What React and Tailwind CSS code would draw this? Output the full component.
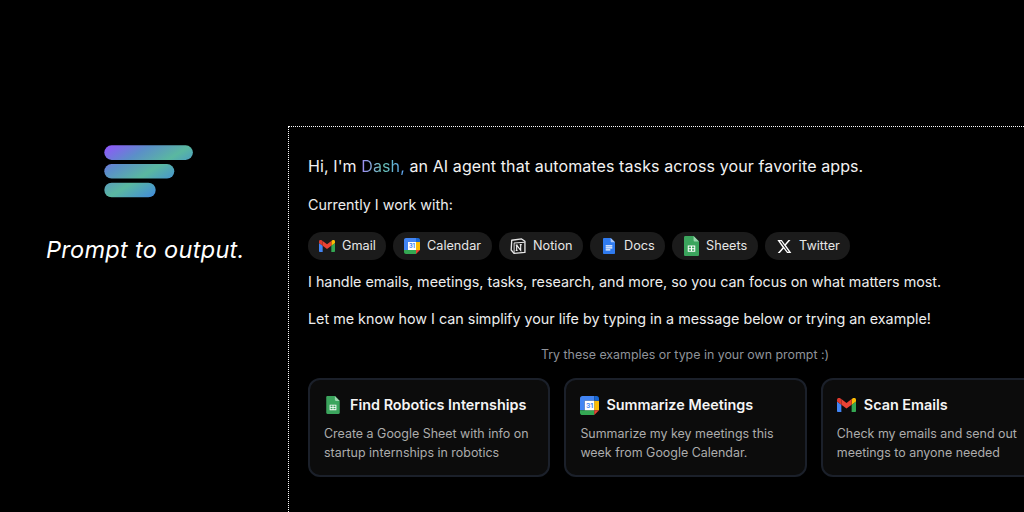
const GmailIcon = ({ s = 16 }) => (
  <svg width={s} height={s * 0.75} viewBox="0 0 24 18">
    <path d="M1.6 18H5.5V8.5L0 4.4V16.4C0 17.3.7 18 1.6 18Z" fill="#4285F4" />
    <path d="M18.5 18H22.4C23.3 18 24 17.3 24 16.4V4.4L18.5 8.5Z" fill="#34A853" />
    <path d="M18.5 1.4V8.5L24 4.4V2.2C24 .2 21.7-1 20.1.2Z" fill="#FBBC04" />
    <path d="M5.5 8.5V1.4L12 6.3 18.5 1.4V8.5L12 13.4Z" fill="#EA4335" />
    <path d="M0 2.2V4.4L5.5 8.5V1.4L3.9.2C2.3-1 0 .2 0 2.2Z" fill="#DB3A2E" />
  </svg>
);

const CalendarIcon = ({ s = 16 }) => (
  <svg width={s} height={s} viewBox="0 0 24 24">
    <path d="M3 0H18V6H6V18H0V3C0 1.3 1.3 0 3 0Z" fill="#4285F4" />
    <rect x="18" y="6" width="6" height="12" fill="#FBBC04" />
    <path d="M6 18H18V24H3C1.3 24 0 22.7 0 21V18Z" fill="#34A853" />
    <path d="M18 18H24L18 24Z" fill="#EA4335" />
    <path d="M18 0H21C22.7 0 24 1.3 24 3V6H18Z" fill="#1967D2" />
    <rect x="6" y="6" width="12" height="12" fill="#fff" />
    <text x="12" y="15.5" textAnchor="middle" fontSize="8.5" fontWeight="700" fill="#4285F4" fontFamily="Inter, sans-serif">31</text>
  </svg>
);

const NotionIcon = ({ s = 16 }) => (
  <svg width={s} height={s} viewBox="0 0 24 24">
    <path d="M2.6 3.4 17.4 1.4 22.4 4.8V21.6L6 23 1.8 18Z" fill="#1b1b1b" stroke="#e8e8e8" strokeWidth="2" strokeLinejoin="round" />
    <path d="M6 7.6 22 6.4" fill="none" stroke="#e8e8e8" strokeWidth="1.6" />
    <path d="M6.2 7.6V22.4" fill="none" stroke="#e8e8e8" strokeWidth="1.4" />
    <path d="M10 10.6V18.6M10 10.6 16 18.6V10M8.6 10.6H11.4M14.6 10H17.6M8.6 18.8H11.4" fill="none" stroke="#f2f2f2" strokeWidth="1.7" />
  </svg>
);

const DocsIcon = ({ w = 12, h = 16 }) => (
  <svg width={w} height={h} viewBox="0 0 18 24">
    <path d="M1.6 0H11.5L18 6.5V22.4C18 23.3 17.3 24 16.4 24H1.6C.7 24 0 23.3 0 22.4V1.6C0 .7.7 0 1.6 0Z" fill="#2F7BF0" />
    <path d="M11.5 0 18 6.5H13C12.2 6.5 11.5 5.8 11.5 5Z" fill="#A9C8FA" />
    <path d="M4 11H14V12.6H4ZM4 14H14V15.6H4ZM4 17H11V18.6H4Z" fill="#fff" />
  </svg>
);

const SheetsIcon = ({ w = 15, h = 20 }) => (
  <svg width={w} height={h} viewBox="0 0 18 24">
    <path d="M1.6 0H11.5L18 6.5V22.4C18 23.3 17.3 24 16.4 24H1.6C.7 24 0 23.3 0 22.4V1.6C0 .7.7 0 1.6 0Z" fill="#3ba55d" />
    <path d="M11.5 0 18 6.5H13C12.2 6.5 11.5 5.8 11.5 5Z" fill="#9AD6AE" />
    <path d="M4.5 11.5H13.5V19H4.5ZM5.7 12.7V14.6H8.4V12.7ZM9.6 12.7V14.6H12.3V12.7ZM5.7 15.8V17.8H8.4V15.8ZM9.6 15.8V17.8H12.3V15.8Z" fill="#fff" fillRule="evenodd" />
  </svg>
);

const XIcon = () => (
  <svg width="15" height="15" viewBox="0 0 24 24">
    <path d="M18.2 1.5H21.6L14.2 10 23 22.5H16.1L10.7 15 4.5 22.5H1.1L9 13.4.6 1.5H7.7L12.6 8.4ZM17 20.4H18.9L6.7 3.5H4.7Z" fill="#fff" />
  </svg>
);

const Logo = () => (
  <svg width="90" height="53" viewBox="0 0 90 53" className="ml-[104px]">
    <defs>
      <linearGradient id="dashLogo" gradientUnits="userSpaceOnUse" x1="0" y1="0" x2="38.5" y2="60.8">
        <stop offset="0.06" stopColor="#8b5cf6" />
        <stop offset="0.35" stopColor="#5b8fc8" />
        <stop offset="0.65" stopColor="#5ab8a0" />
        <stop offset="1" stopColor="#4189dd" />
      </linearGradient>
    </defs>
    <rect x="0.3" y="0.3" width="88.6" height="14.6" rx="7.3" fill="url(#dashLogo)" />
    <rect x="0.3" y="19" width="70" height="14.6" rx="7.3" fill="url(#dashLogo)" />
    <rect x="0.3" y="37.7" width="51.4" height="14.6" rx="7.3" fill="url(#dashLogo)" />
  </svg>
);

const Chip = ({ icon, label, width }) => (
  <div className={`flex items-center h-7 rounded-full bg-[#1b1b1b] pl-[11px] ${width}`}>
    <span className="flex items-center justify-center w-4 mr-[7px] shrink-0">{icon}</span>
    <span className="text-[12.7px] leading-none text-[#e6e6e6]">{label}</span>
  </div>
);

const Card = ({ icon, title, lines, gap }) => (
  <div className="w-[242.4px] h-[99px] shrink-0 rounded-[12px] border-2 border-[#1b202a] bg-[#0c0c0c] pl-[14px] pt-[13px]">
    <div className={`flex items-center h-6 ${gap}`}>
      {icon}
      <span className="text-[14.4px] leading-6 font-semibold text-[#f5f5f5]">{title}</span>
    </div>
    <p className="mt-[7px] text-[12.45px] leading-[19px] text-[#adadad] whitespace-nowrap">
      {lines[0]}
      <br />
      {lines[1]}
    </p>
  </div>
);

export default function App() {
  return (
    <div className="flex h-[512px] w-[1024px] overflow-hidden bg-black text-white font-['Inter',sans-serif]">
      <div className="w-[288px] shrink-0 pt-[145px] flex flex-col">
        <Logo />
        <p className="mt-[36px] ml-[46px] text-[23.5px] leading-[32px] italic tracking-[0.3px] whitespace-nowrap font-['Inter',sans-serif] text-white">
          Prompt to output.
        </p>
      </div>

      <div className="mt-[126px] flex-1 border-t border-l border-dotted border-white pl-[19px] pt-[27px] min-w-0">
        <div className="w-[754px]">
          <p className="text-[16px] leading-6 text-[#f2f2f2] tracking-[0.1px]">
            Hi, I'm{" "}
            <span className="bg-[linear-gradient(90deg,#a08af5,#68c4b6,#60a5fa)] bg-clip-text text-transparent">Dash,</span>{" "}
            an AI agent that automates tasks across your favorite apps.
          </p>
          <p className="mt-[15px] text-[14.33px] leading-6 text-[#ededed]">Currently I work with:</p>
          <div className="mt-[15px] flex gap-[7px]">
            <Chip icon={<GmailIcon />} label="Gmail" width="w-[78px]" />
            <Chip icon={<CalendarIcon />} label="Calendar" width="w-[99px]" />
            <Chip icon={<NotionIcon />} label="Notion" width="w-[84px]" />
            <Chip icon={<DocsIcon />} label="Docs" width="w-[75px]" />
            <Chip icon={<SheetsIcon />} label="Sheets" width="w-[86px]" />
            <Chip icon={<XIcon />} label="Twitter" width="w-[85px]" />
          </div>
          <p className="mt-[10px] text-[14.33px] leading-6 text-[#ededed]">
            I handle emails, meetings, tasks, research, and more, so you can focus on what matters most.
          </p>
          <p className="mt-[13px] text-[14.33px] leading-6 text-[#ededed]">
            Let me know how I can simplify your life by typing in a message below or trying an example!
          </p>
          <p className="mt-[15px] text-center text-[12.4px] leading-[18px] text-[#8f939a]">
            Try these examples or type in your own prompt :)
          </p>
          <div className="mt-[14px] flex gap-[14px]">
            <Card icon={<SheetsIcon w={14} h={18} />} gap="gap-[10px] pl-[2px]" title="Find Robotics Internships" lines={["Create a Google Sheet with info on", "startup internships in robotics"]} />
            <Card icon={<CalendarIcon s={19} />} gap="gap-[7px]" title="Summarize Meetings" lines={["Summarize my key meetings this", "week from Google Calendar."]} />
            <Card icon={<GmailIcon s={19} />} gap="gap-[8px]" title="Scan Emails" lines={["Check my emails and send out", "meetings to anyone needed"]} />
          </div>
        </div>
      </div>
    </div>
  );
}
